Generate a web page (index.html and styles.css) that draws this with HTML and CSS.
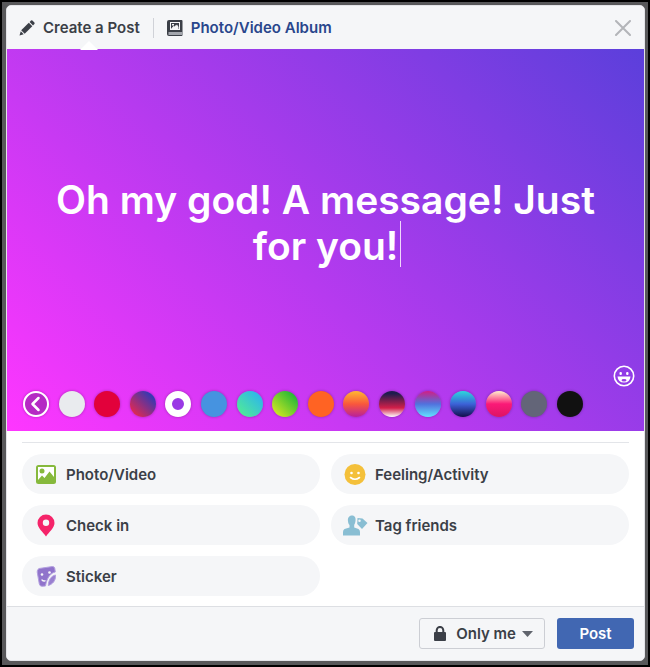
FILE: index.html
```html
<!DOCTYPE html>
<html lang="en">
<head>
    <meta charset="UTF-8">
    <meta name="viewport" content="width=device-width, initial-scale=1.0">
    <title>Create a Post</title>
    <link rel="stylesheet" href="styles.css">
</head>
<body>
    <form class="dialog">
        <header class="header">
            <button type="button" class="tab active">
                <svg width="16" height="16" viewBox="0 0 16 16" fill="#3b3f47">
                    <path d="M0.5 15.5 1.8 11.3 4.7 14.2z"/>
                    <path d="M2.2 10.3 9.8 2.700 13.300 6.2 5.7 13.8z"/>
                    <path d="M10.6 2 12 .6Q12.7 0 13.4.6L15.400 2.6Q16 3.3 15.400 4L14 5.4z"/>
                </svg>
                Create a Post
            </button>
            <a href="#" class="tab album">
                <svg width="16" height="16" viewBox="0 0 16 16">
                    <path fill="#3b3f47" d="M2 0H14.5Q15.5 0 15.5 1V15Q15.5 16 14.5 16H2Q0 16 0 14V2Q0 0 2 0z"/>
                    <path fill="#f5f6f7" d="M3 2H13V10H3z"/>
                    <path fill="#3b3f47" d="M4 3H12V9H11L9 5 7.5 6.500 6.500 6 4 9z"/>
                    <path fill="#f5f6f7" d="M5 4H7V5.500H5zM4.500 9 6.500 6.500 7.500 7.500 10 4.500 11.500 7V9z"/>
                    <path fill="#a3a6ad" d="M1.500 12H15.500V15H1.500z"/>
                </svg>
                Photo/Video Album
            </a>
            <button type="button" class="close" aria-label="Close">
                <svg width="16" height="16" viewBox="0 0 16 16" fill="none" stroke="#b3b5b9" stroke-width="2" stroke-linecap="round">
                    <path d="M1 1 15 15M15 1 1 15"/>
                </svg>
            </button>
        </header>

        <section class="composer">
            <div class="message-box">
                <textarea class="message" rows="2" aria-label="Message" spellcheck="false">Oh my god! A message! Just for you!</textarea>
                <span class="caret"></span>
            </div>
            <button type="button" class="emoji" aria-label="Insert an emoji">
                <svg width="22" height="22" viewBox="0 0 22 22">
                    <circle cx="11" cy="11" r="9.700" fill="none" stroke="#fff" stroke-width="1.600"/>
                    <rect x="6.500" y="7" width="2.400" height="3" rx="1" fill="#fff"/>
                    <rect x="13.100" y="7" width="2.400" height="3" rx="1" fill="#fff"/>
                    <path fill="#fff" d="M4.500 11.500H17.500Q17 17.500 11 17.500T4.500 11.500z"/>
                    <ellipse cx="11" cy="15.200" rx="2.500" ry="1.200" fill="#9a3ae5"/>
                </svg>
            </button>
            <div class="swatches">
                <button type="button" class="swatch back" aria-label="Hide backgrounds">
                    <svg width="22" height="22" viewBox="0 0 22 22" fill="none" stroke="#fff" stroke-width="2.500" stroke-linecap="round" stroke-linejoin="round">
                        <path d="M13.500 5 7.500 11 13.500 17"/>
                    </svg>
                </button>
                <button type="button" class="swatch none" aria-label="No background"></button>
                <button type="button" class="swatch red" aria-label="Red"></button>
                <button type="button" class="swatch red-blue" aria-label="Red and blue"></button>
                <button type="button" class="swatch selected" aria-label="Purple, selected"></button>
                <button type="button" class="swatch blue" aria-label="Blue"></button>
                <button type="button" class="swatch aqua" aria-label="Aqua"></button>
                <button type="button" class="swatch lime" aria-label="Lime"></button>
                <button type="button" class="swatch orange" aria-label="Orange"></button>
                <button type="button" class="swatch sunset" aria-label="Sunset"></button>
                <button type="button" class="swatch dusk" aria-label="Dusk"></button>
                <button type="button" class="swatch candy" aria-label="Candy"></button>
                <button type="button" class="swatch ocean" aria-label="Ocean"></button>
                <button type="button" class="swatch pink" aria-label="Pink"></button>
                <button type="button" class="swatch gray" aria-label="Gray"></button>
                <button type="button" class="swatch black" aria-label="Black"></button>
            </div>
        </section>

        <section class="options">
            <button type="button" class="option">
                <svg width="24" height="24" viewBox="0 0 24 24">
                    <rect x="2" y="3" width="20" height="19" rx="2.500" fill="#86b93c"/>
                    <path fill="#fff" d="M4 5H20V15L15.500 9.500 10.500 16 8 13.500 4 18z"/>
                    <circle cx="8" cy="9" r="2.500" fill="#86b93c"/>
                </svg>
                Photo/Video
            </button>
            <button type="button" class="option">
                <svg width="24" height="24" viewBox="0 0 24 24">
                    <circle cx="12" cy="12.500" r="10.500" fill="#f4c03a"/>
                    <circle cx="8.500" cy="11" r="1.300" fill="#fff"/>
                    <circle cx="15.500" cy="11" r="1.300" fill="#fff"/>
                    <path d="M7.500 15.500Q12 19 16.500 15.500" fill="none" stroke="#fff" stroke-width="1.600" stroke-linecap="round"/>
                </svg>
                Feeling/Activity
            </button>
            <button type="button" class="option">
                <svg width="24" height="24" viewBox="0 0 24 24">
                    <path fill="#f5246a" fill-rule="evenodd" d="M12 1.500A8.500 8.500 0 0 1 20.500 10C20.500 15 15 19 12 23.500 9 19 3.500 15 3.500 10A8.500 8.500 0 0 1 12 1.500zM12 6.500A3.200 3.200 0 1 0 12 12.900 3.200 3.200 0 1 0 12 6.500z"/>
                </svg>
                Check in
            </button>
            <button type="button" class="option">
                <svg width="24" height="24" viewBox="0 0 24 24" fill="#89bed3" overflow="visible">
                    <path d="M9 2.500C12 2.500 13 5 12.500 8 12.300 10 11.500 11 11.200 12V14.500L15.500 16Q17 17 17 19V22.500H0V19Q0 17 1.500 16L6.500 14.500V12C5.500 11 5 9.500 5 8 4.500 5 6 2.500 9 2.500z"/>
                    <path fill-rule="evenodd" d="M14.500 5 19.500 5.500 24.500 10 19 16 14.200 11zM16.500 6.500A1.200 1.200 0 1 0 16.500 9 1.200 1.200 0 1 0 16.500 6.500z"/>
                </svg>
                Tag friends
            </button>
            <button type="button" class="option">
                <svg width="24" height="24" viewBox="0 0 24 24">
                    <path fill="#9073cb" stroke="#b3a0df" d="M5 4.500 18.500 2.500Q20.500 2.500 20.800 4.500L21.300 8C17 9 13 13 11.500 22L8 22.300Q5.800 22.300 5.300 20L3.200 8Q3 5.500 5 4.500z"/>
                    <path fill="#9a80d0" stroke="#b3a0df" d="M21.500 11C17 12 14.500 16 14.300 21.500 18 20.500 22 17 21.500 11z"/>
                    <circle cx="8" cy="10.500" r="1.300" fill="#f5f6f8"/>
                    <circle cx="15.500" cy="8.500" r="1.300" fill="#f5f6f8"/>
                    <path d="M8 16Q9.500 17.500 11 16.800" fill="none" stroke="#f5f6f8" stroke-width="1.400" stroke-linecap="round"/>
                </svg>
                Sticker
            </button>
        </section>

        <footer class="footer">
            <button type="button" class="privacy">
                <svg width="12" height="15" viewBox="0 0 12 15">
                    <rect x="0" y="6" width="12" height="9" rx="1" fill="#3b3f47"/>
                    <path d="M2.700 7V4.200A3.300 3.300 0 0 1 9.300 4.200V7" fill="none" stroke="#3b3f47" stroke-width="2"/>
                </svg>
                <span>Only me</span>
                <svg width="11" height="6" viewBox="0 0 11 6">
                    <path d="M0 0H11L5.500 6z" fill="#60646d"/>
                </svg>
            </button>
            <button type="submit" class="post">Post</button>
        </footer>
    </form>
</body>
</html>
```

FILE: styles.css
```css
* {
    box-sizing: border-box;
}
html {
    background-color: #000;
}
body {
    margin: 0;
    padding: 3px 3px 4px 4px;
    border: 2px solid #000;
    background-color: #58585a;
    font-family: Inter, "Liberation Sans", sans-serif;
    font-size: 15px;
    font-weight: 600;
    color: #3b3f47;
}
button,
textarea {
    margin: 0;
    padding: 0;
    border: none;
    background: none;
    font: inherit;
    color: inherit;
}
button {
    cursor: pointer;
}
svg {
    display: block;
    flex-shrink: 0;
}
.dialog {
    background-color: #fff;
    border: 1px solid #e3e4e8;
    border-radius: 5px;
    overflow: hidden;
}

/* Header tabs */
.header {
    display: flex;
    align-items: center;
    height: 43px;
    padding: 0 13px 0 12px;
    background-color: #f5f6f8;
}
.tab {
    display: flex;
    align-items: center;
    gap: 8px;
    line-height: 20px;
    text-decoration: none;
}
.tab.active {
    position: relative;
    padding-right: 13px;
    border-right: 1px solid #d0d2d8;
}
.tab.active::after {
    content: "";
    position: absolute;
    left: 61px;
    top: 23px;
    border: 9px solid transparent;
    border-top: none;
    border-bottom-color: #fff;
}
.album {
    padding-left: 13px;
    color: #29468c;
}
.close {
    margin-left: auto;
}

/* Message area */
.composer {
    display: flex;
    flex-direction: column;
    padding: 128px 9px 14px 16px;
    background: linear-gradient(45deg, #ff36ff 0%, #5b3fdb 100%);
}
.message-box {
    position: relative;
    margin-bottom: 96px;
    padding-right: 7px;
}
.message {
    display: block;
    width: 100%;
    padding: 0 24px;
    font-size: 39px;
    line-height: 46px;
    text-align: center;
    color: #fff;
    resize: none;
    outline: none;
    overflow: hidden;
    caret-color: transparent;
}
.caret {
    position: absolute;
    left: calc(50% + 71px);
    bottom: 2px;
    width: 1px;
    height: 46px;
    background-color: #f0d8fb;
}
.emoji {
    align-self: flex-end;
    margin-bottom: 4px;
}
.swatches {
    display: flex;
    justify-content: space-between;
    padding-right: 52px;
}
.swatch {
    width: 26px;
    height: 26px;
    border-radius: 50%;
    box-shadow: 0 0 3px rgba(0, 0, 0, 0.3);
}
.back {
    border: 2px solid #fff;
    background-color: rgba(60, 20, 90, 0.35);
}
.none {
    background-color: #e9ebee;
}
.red {
    background-color: #e2013b;
}
.red-blue {
    background: linear-gradient(45deg, #e8284e 10%, #3139b5 85%);
}
.selected {
    border: 7px solid #fff;
    background-color: #9a38e5;
}
.blue {
    background-color: #4693e0;
}
.aqua {
    background: linear-gradient(45deg, #4fe89b 15%, #2cb4ee 90%);
}
.lime {
    background: linear-gradient(45deg, #d3e821 10%, #25b837 85%);
}
.orange {
    background-color: #ff6323;
}
.sunset {
    background: linear-gradient(#ffb830, #f9573c 50%, #b8209c);
}
.dusk {
    background: linear-gradient(#1f1c4d 10%, #d21f49 65%, #fff);
}
.candy {
    background: linear-gradient(#d01f86, #5171dd 50%, #62e3ff);
}
.ocean {
    background: linear-gradient(#2cd8dc, #3c62d8 50%, #120d4b);
}
.pink {
    background: linear-gradient(#fff0cc, #fb1977 50%, #dc1464);
}
.gray {
    background-color: #636578;
}
.black {
    background-color: #111;
}

/* Post options */
.options {
    display: grid;
    grid-template-columns: 1fr 1fr;
    gap: 11px;
    margin: 11px 15px 10px;
    padding-top: 11px;
    border-top: 1px solid #e3e5e9;
}
.option {
    display: flex;
    align-items: center;
    gap: 8px;
    height: 40px;
    padding: 0 12px;
    border-radius: 20px;
    background-color: #f5f6f8;
}

/* Footer */
.footer {
    display: flex;
    justify-content: flex-end;
    align-items: center;
    gap: 12px;
    height: 54px;
    padding: 0 10px;
    border-top: 1px solid #dddfe3;
    background-color: #f5f6f8;
}
.privacy {
    display: flex;
    align-items: center;
    gap: 10px;
    height: 31px;
    padding: 0 11px 0 14px;
    border: 1px solid #ccced4;
    border-radius: 3px;
}
.privacy span {
    margin-right: -4px;
}
.post {
    width: 77px;
    height: 31px;
    border-radius: 3px;
    background-color: #4167b2;
    color: #fff;
}
```
